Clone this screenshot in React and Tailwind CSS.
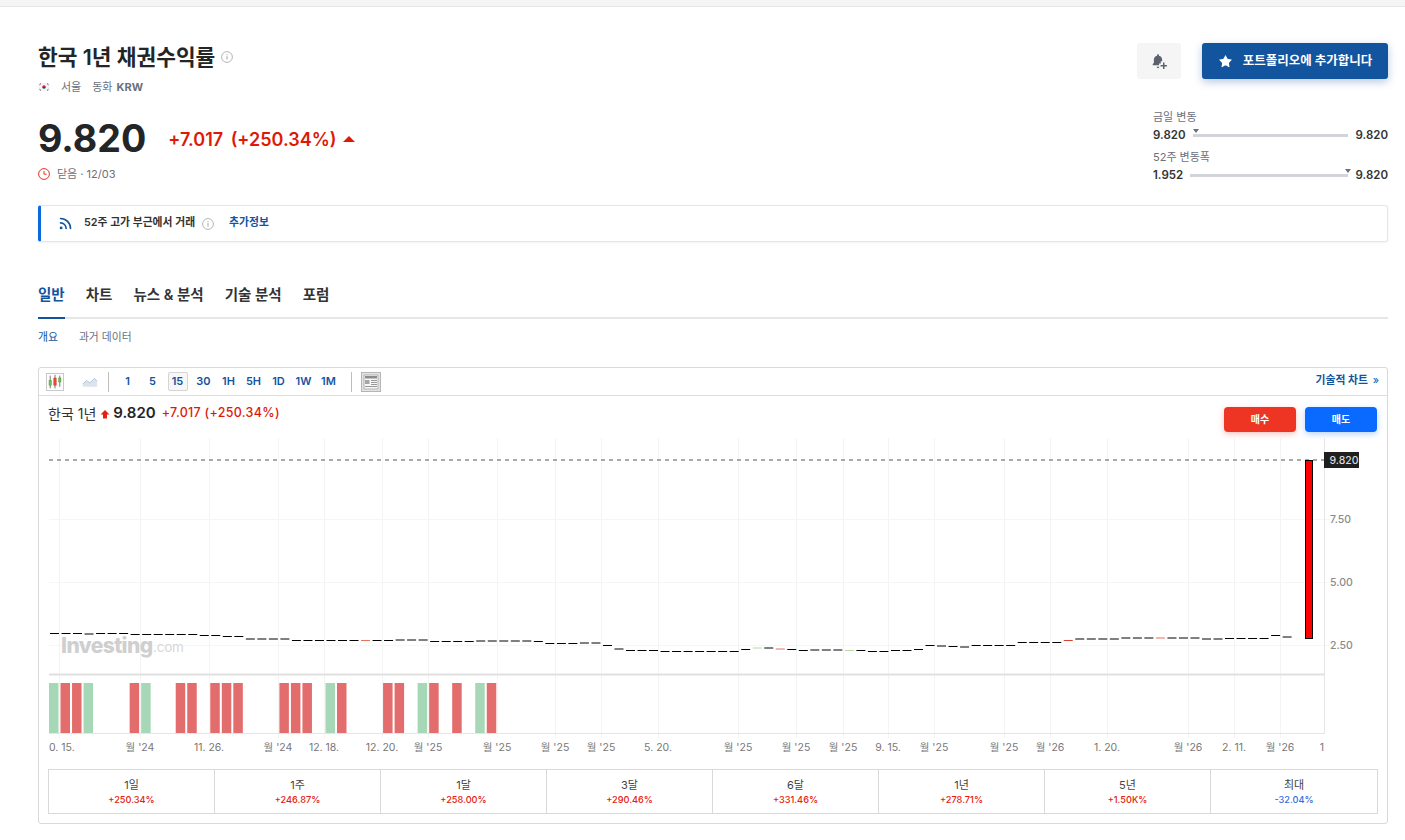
import React from 'react';
import { Star, Rss } from 'lucide-react';

const font = '[font-family:Inter,"Noto_Sans_CJK_KR",sans-serif]';

const Info = ({ className }) => (
  <svg viewBox="0 0 12 12" className={className} fill="none" stroke="currentColor">
    <circle cx="6" cy="6" r="5.4" strokeWidth="0.8" />
    <path d="M6 5.2v3.4M6 3.2v1" strokeWidth="1" />
  </svg>
);

const KoreaFlag = () => (
  <svg viewBox="0 0 12 12" className="w-3 h-3">
    <rect x="0.5" y="2" width="11" height="8" fill="#f4f4f6" />
    <path d="M4.2 6a1.8 1.8 0 0 1 3.6 0z" fill="#d5273b" />
    <path d="M4.2 6a1.8 1.8 0 0 0 3.6 0z" fill="#1d3f94" />
    <path d="M1.6 3.6l1.2-.9M1.6 8.4l1.2.9M10.4 3.6l-1.2-.9M10.4 8.4l-1.2.9" stroke="#222" strokeWidth="0.9" />
  </svg>
);

const BellPlus = () => (
  <svg viewBox="0 0 16 16" className="w-[17px] h-[17px]" fill="#5b616e">
    <path d="M6.6 1.2c.5 0 .9.4.9.9v.5c2 .4 3 2 3 3.9v1.2H9.2v2.2H7.6v1.6H1.6v-.9l1.1-1.4V6.5c0-1.9 1-3.5 3-3.9v-.5c0-.5.4-.9.9-.9zM5.4 13h2.4c0 .8-.5 1.4-1.2 1.4S5.400 13.800 5.400 13z" />
    <path d="M11.300 9h1.400v2.300H15v1.400h-2.300V15h-1.400v-2.300H9v-1.400h2.300z" />
  </svg>
);

const CandleIcon = () => (
  <svg viewBox="0 0 20 20" className="w-[18px] h-[18px] border border-[#c9c9c9]">
    <path d="M4 2v16M10 1v17M16 2v14" stroke="#555" strokeWidth="1" />
    <rect x="2.500" y="8" width="3" height="6" fill="#6fc04f" stroke="#4a8a32" strokeWidth="0.5" />
    <rect x="8.500" y="5" width="3" height="9" fill="#e8473a" stroke="#a83227" strokeWidth="0.5" />
    <rect x="14.500" y="5" width="3" height="5" fill="#6fc04f" stroke="#4a8a32" strokeWidth="0.5" />
  </svg>
);

const AreaIcon = () => (
  <svg viewBox="0 0 18 12" className="w-4 h-[11px]">
    <path d="M1 9l4-4 4 2.500 5-5 3 3V12H1z" fill="#dbe4ee" />
    <path d="M1 9l4-4 4 2.500 5-5 3 3" fill="none" stroke="#a9bfd6" strokeWidth="1" />
  </svg>
);

const NewsIcon = () => (
  <svg viewBox="0 0 20 20" className="w-5 h-5">
    <rect x="0.500" y="0.500" width="19" height="19" fill="#e4e4e4" stroke="#b5b5b5" />
    <rect x="3" y="3" width="14" height="14" fill="#f7f7f7" stroke="#8c8c8c" strokeWidth="0.6" />
    <rect x="4" y="4" width="12" height="2.500" fill="#8c8c8c" />
    <rect x="4" y="8" width="4.500" height="4" fill="#a5a5a5" />
    <path d="M10 8.500h6M10 10.500h6M10 12.500h6M4 14.500h12" stroke="#8c8c8c" strokeWidth="0.9" />
  </svg>
);

const tabs = ['일반', '차트', '뉴스 & 분석', '기술 분석', '포럼'];
const intervals = ['1', '5', '15', '30', '1H', '5H', '1D', '1W', '1M'];
const perf = [
  ['1일', '+250.34%'], ['1주', '+246.87%'], ['1달', '+258.00%'], ['3달', '+290.46%'],
  ['6달', '+331.46%'], ['1년', '+278.71%'], ['5년', '+1.50K%'], ['최대', '-32.04%'],
];

// chart data, y in page pixels, one candle per 11.52px
const closes = [
  633.5, 633.5, 633.5, 634, 633.5, 633.5, 633.5, 634.5, 634.5, 634.5, 634.5, 634.5, 634.5, 635.5, 635.5,
  636.5, 636.5, 639, 639, 639, 639, 640.5, 640.5, 640.5, 640.5, 640.5, 640.5, 640.5, 640.5, 640.5,
  640, 640, 640, 641.5, 641.5, 641.5, 641.5, 641, 641, 641, 641, 641, 641.5, 643.5, 643.5, 643.5, 643, 643,
  645.5, 649, 650.5, 650.5, 650.5, 651.5, 651.5, 651.5, 651.5, 651.5, 651.5, 651.5, 649.5, 648, 648, 649,
  649.5, 650.5, 650, 650, 650, 650.5, 650.5, 651.5, 651.5, 650.5, 650.5, 649.5, 645.5, 646, 646.5, 647,
  645.5, 645.5, 645.5, 645.5, 642.5, 642.5, 642.5, 642.5, 640.5, 639, 639, 639, 639, 638, 638, 638, 638, 638,
  638, 638, 639, 639, 638.5, 638.5, 638.5, 638.5, 635.5, 637,
];
const candleColors = { 27: '#e4735f', 61: '#b9d9a6', 63: '#e4735f', 69: '#b9d9a6', 88: '#d9432f', 96: '#e4735f' };
const volRed = [1, 2, 7, 11, 12, 14, 15, 16, 20, 21, 22, 25, 29, 30, 33, 35, 38];
const volGreen = [0, 3, 8, 24, 32, 37];
const xTicks = [
  [59, '0. 15.'], [140, "월 '24"], [209, '11. 26.'], [278, "월 '24"], [324, '12. 18.'], [382, '12. 20.'],
  [428, "월 '25"], [497, "월 '25"], [555, "월 '25"], [601, "월 '25"], [658, '5. 20.'], [738, "월 '25"],
  [796, "월 '25"], [843, "월 '25"], [888, '9. 15.'], [934, "월 '25"], [1004, "월 '25"], [1050, "월 '26"],
  [1107, '1. 20.'], [1188, "월 '26"], [1234, '2. 11.'], [1280, "월 '26"], [1322, '1'],
];

const Chart = () => (
  <svg viewBox="39 436 1348 330" className="block w-[1348px] h-[330px]" style={{ fontFamily: 'Inter, "Noto Sans CJK KR", sans-serif' }}>
    {xTicks.map(([x], i) => x < 1322 && (
      <line key={i} x1={x + 0.5} x2={x + 0.5} y1="438" y2="738" stroke="#f4f4f4" />
    ))}
    {[519, 582, 645].map((y) => (
      <line key={y} x1="49" x2="1330" y1={y + 0.5} y2={y + 0.5} stroke="#f6f6f6" />
    ))}
    <line x1="1324.5" x2="1324.5" y1="438" y2="734" stroke="#e6e6e6" />
    <line x1="49" x2="1325" y1="733.5" y2="733.5" stroke="#e6e6e6" />
    <line x1="49" x2="1325" y1="674.5" y2="674.5" stroke="#e0e0e0" strokeWidth="2" />
    <line x1="49" x2="1324" y1="460" y2="460" stroke="#8d8d8d" strokeWidth="1.500" strokeDasharray="4 4" />

    {closes.map((y, i) => (
      <line key={i} x1={50 + i * 11.52} x2={59 + i * 11.52} y1={y} y2={y} stroke={candleColors[i] || '#000'} />
    ))}
    <rect x="1305.500" y="460.500" width="7" height="178" fill="#ff0000" stroke="#000" />

    {volRed.map((i) => <rect key={i} x={49 + i * 11.52} y="683" width="9.500" height="50" fill="#e36d6c" />)}
    {volGreen.map((i) => <rect key={i} x={49 + i * 11.52} y="683" width="9.500" height="50" fill="#a6d7b6" />)}

    <text x="61" y="653" fontSize="21" fontWeight="800" fill="#cfcfcf" letterSpacing="-0.600">Investing</text>
    <text x="153" y="652" fontSize="13.500" fill="#d8d8d8" letterSpacing="-0.200">.com</text>

    <rect x="1324" y="452" width="35" height="16" fill="#1f1f1f" />
    <text x="1329.500" y="464" fontSize="10.500" fontWeight="500" fill="#dcdcdc">9.820</text>
    {[[519, '7.50'], [582, '5.00'], [645, '2.50']].map(([y, t]) => (
      <text key={t} x="1330" y={y + 4} fontSize="10.500" fontWeight="500" fill="#8a8a8a">{t}</text>
    ))}
    {xTicks.map(([x, t], i) => (
      <text key={i} x={i === 0 ? 49 : x} y="751" fontSize="10.500" fill="#777" textAnchor={i === 0 ? 'start' : 'middle'}>{t}</text>
    ))}
  </svg>
);

const Range = ({ label, low, high, marker, barClass }) => (
  <div>
    <div className="text-[11px] leading-[14px] text-[#6a707c]">{label}</div>
    <div className="mt-[3px] flex items-center text-[11.5px] leading-[16px] font-semibold text-[#333]">
      <span className="w-[37px]">{low}</span>
      <span className={`relative h-[3px] bg-[#d3d4da] ${barClass}`}>
        <span className={`absolute -top-[5px] ${marker} w-0 h-0 border-x-[3px] border-x-transparent border-t-[4px] border-t-[#6a707c]`} />
      </span>
      <span className="w-[40px] text-right">{high}</span>
    </div>
  </div>
);

export default function App() {
  return (
    <div className={`min-h-screen bg-white ${font} text-[#232526]`}>
      <div className="h-[7px] bg-[#f5f5f5] border-b border-[#e6e6e6]" />
      <div className="pl-[38px] pr-[17px] pb-[17px]">
        <div className="flex justify-between pt-[36px]">
          <div>
            <div className="flex items-center h-[28px]">
              <h1 className="text-[21.4px] leading-[28px] font-semibold">한국 1년 채권수익률</h1>
              <Info className="w-3 h-3 ml-[6px] text-[#a0a3a8]" />
            </div>
            <div className="flex items-center mt-[9px] h-[14px] text-[11px] text-[#6a707c]">
              <KoreaFlag />
              <span className="ml-[11px]">서울</span>
              <span className="ml-[11px]">동화</span>
              <span className="ml-[4px] font-bold">KRW</span>
            </div>
            <div className="flex items-center mt-[22px] h-[46px]">
              <span className="text-[37.6px] leading-[46px] font-bold">9.820</span>
              <span className="ml-[22px] text-[18px] font-semibold text-[#dd1a06] [word-spacing:3px]">+7.017 (+250.34%)</span>
              <span className="ml-[7px] w-0 h-0 border-x-[6px] border-x-transparent border-b-[6px] border-b-[#dd1a06]" />
            </div>
            <div className="flex items-center mt-[4px] h-[16px] text-[11px] text-[#6a707c]">
              <svg viewBox="0 0 12 12" className="w-3 h-3" fill="none" stroke="#e5331f" strokeWidth="1">
                <circle cx="6" cy="6" r="5.400" />
                <path d="M6 3v3.200h2.600" />
              </svg>
              <span className="ml-[7px]">닫음 · 12/03</span>
            </div>
          </div>

          <div className="flex flex-col items-end">
            <div className="flex items-center gap-[21px]">
              <button className="w-[44px] h-[36px] rounded-[3px] bg-[#f5f5f5] flex items-center justify-center">
                <BellPlus />
              </button>
              <button className="w-[186px] h-[36px] rounded-[3px] bg-[#13549f] text-white text-[12.5px] font-bold flex items-center justify-center gap-[10px] shadow-[0_3px_8px_rgba(19,84,159,0.3)]">
                <Star className="w-[15px] h-[15px]" fill="white" strokeWidth={0} />
                포트폴리오에 추가합니다
              </button>
            </div>
            <div className="w-[235px] mt-[31px] flex flex-col gap-[7px]">
              <Range label="금일 변동" low="9.820" high="9.820" barClass="w-[155px] ml-[3px]" marker="left-0" />
              <Range label="52주 변동폭" low="1.952" high="9.820" barClass="w-[158px]" marker="-right-[3px]" />
            </div>
          </div>
        </div>

        <div className="mt-[22px] h-[37px] flex items-center rounded-[3px] border border-[#e6e6e6] border-l-[3px] border-l-[#0a69e0] shadow-[0_1px_3px_rgba(0,0,0,0.06)] text-[10.8px]">
          <Rss className="ml-[17px] w-[15px] h-[15px] text-[#13549f]" strokeWidth={2.600} />
          <span className="ml-[11px] -mt-[1px] font-semibold text-[#333]">52주 고가 부근에서 거래</span>
          <Info className="w-3 h-3 ml-[7px] text-[#a0a3a8]" />
          <span className="ml-[15px] -mt-[1px] font-semibold text-[#13549f]">추가정보</span>
        </div>

        <div className="mt-[37px] flex gap-[21px] h-[40px] border-b-2 border-[#e6e6e6]">
          {tabs.map((t, i) => (
            <div key={t} className={`h-[40px] pt-[6px] text-[14.5px] leading-[20px] font-semibold ${i === 0 ? 'text-[#13549f] border-b-2 border-[#13549f]' : 'text-[#333]'}`}>
              {t}
            </div>
          ))}
        </div>
        <div className="mt-[11px] flex gap-[21px] h-[16px] text-[10.8px] leading-[16px]">
          <span className="text-[#13549f]">개요</span>
          <span className="text-[#6a707c]">과거 데이터</span>
        </div>

        <div className="mt-[21px] h-[457px] border border-[#d9d9d9] rounded-[3px]">
          <div className="h-[28px] flex items-center justify-between border-b border-[#dedede] pr-[8px]">
            <div className="flex items-center">
              <div className="ml-[7px] w-[18px] flex justify-center"><CandleIcon /></div>
              <div className="ml-[18px]"><AreaIcon /></div>
              <div className="ml-[10px] w-px h-[20px] bg-[#bdbdbd]" />
              <div className="ml-[6px] flex items-center text-[11px] font-semibold text-[#13549f]">
                {intervals.map((t) => (
                  t === '15' ? (
                    <span key={t} className="w-[20px] ml-[2.5px] mr-[3.5px] h-[19px] flex items-center justify-center border border-[#d5d5d5] bg-[#f7f7f7] rounded-[2px]">{t}</span>
                  ) : (
                    <span key={t} className="w-[25px] h-[19px] flex items-center justify-center">{t}</span>
                  )
                ))}
              </div>
              <div className="ml-[10px] w-px h-[20px] bg-[#bdbdbd]" />
              <div className="ml-[9px]"><NewsIcon /></div>
            </div>
            <span className="text-[10.8px] font-semibold text-[#13549f]">기술적 차트 <span className="ml-[2px] font-normal">»</span></span>
          </div>

          <div className="h-[40px] flex justify-between pl-[9px] pr-[10px]">
            <div className="flex items-center h-[34px] text-[14px]">
              <span className="text-[#333]">한국 1년</span>
              <svg viewBox="0 0 10 10" className="ml-[4px] w-[10px] h-[10px] mt-[2px]"><path d="M5 1l4.500 4.500H7V9.500H3V5.500H.500z" fill="#e5200f" /></svg>
              <span className="ml-[3px] text-[15px] font-semibold">9.820</span>
              <span className="ml-[6px] text-[12.5px] font-medium text-[#dd1a06] tracking-[0.3px]">+7.017 (+250.34%)</span>
            </div>
            <div className="flex gap-[9px] pt-[11px]">
              <button className="w-[72px] h-[25px] rounded-[4px] bg-[#ee3524] text-white text-[10px] font-bold shadow-[0_2px_6px_rgba(238,53,36,0.3)]">매수</button>
              <button className="w-[72px] h-[25px] rounded-[4px] bg-[#0a69ff] text-white text-[10px] font-bold shadow-[0_2px_6px_rgba(10,105,255,0.3)]">매도</button>
            </div>
          </div>

          <Chart />

          <div className="mx-[9px] mt-[3px] grid grid-cols-[repeat(7,166px)_1fr] h-[45px] border border-[#d9d9d9]">
            {perf.map(([label, value], i) => (
              <div key={label} className={`flex flex-col items-center justify-center ${i < 7 ? 'border-r border-[#d9d9d9]' : ''}`}>
                <span className="text-[11px] leading-[16px] text-[#444]">{label}</span>
                <span className={`text-[9.2px] leading-[14px] font-medium ${value[0] === '-' ? 'text-[#2f6fe0]' : 'text-[#e5200f]'}`}>{value}</span>
              </div>
            ))}
          </div>
        </div>
      </div>
    </div>
  );
}
